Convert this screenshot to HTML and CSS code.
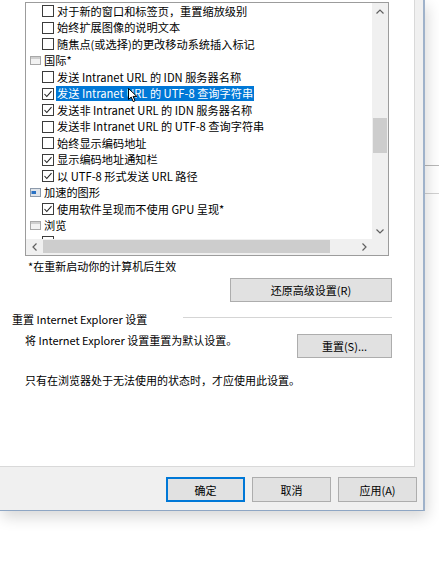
FILE: index.html
```html
<!DOCTYPE html>
<html lang="zh-CN">
<head>
<meta charset="utf-8">
<title>Internet 选项 - 高级</title>
<link rel="stylesheet" href="styles.css">
</head>
<body>
<div class="screen">
  <div class="dialog">
    <div class="page">
      <div class="tree">
        <div class="tree-view">
          <div class="row item"><span class="cb"></span><span class="lbl">对于新的窗口和标签页，重置缩放级别</span></div>
          <div class="row item"><span class="cb"></span><span class="lbl">始终扩展图像的说明文本</span></div>
          <div class="row item"><span class="cb"></span><span class="lbl">随焦点(或选择)的更改移动系统插入标记</span></div>
          <div class="row cat"><svg class="ico" width="11" height="11" viewBox="0 0 11 11"><rect x="0.5" y="1.5" width="10" height="8" fill="#f2f2f2" stroke="#a8a8a8"/><rect x="1" y="2" width="9" height="2" fill="#cfcfcf"/></svg><span class="lbl">国际*</span></div>
          <div class="row item"><span class="cb"></span><span class="lbl">发送 Intranet URL 的 IDN 服务器名称</span></div>
          <div class="row item sel"><span class="cb"><svg width="10" height="10" viewBox="0 0 10 10"><polyline points="1.5,5 3.8,7.5 8.5,2.2" fill="none" stroke="#222" stroke-width="1.1"/></svg></span><span class="lbl">发送 Intranet URL 的 UTF-8 查询字符串</span></div>
          <div class="row item"><span class="cb"><svg width="10" height="10" viewBox="0 0 10 10"><polyline points="1.5,5 3.8,7.5 8.5,2.2" fill="none" stroke="#222" stroke-width="1.1"/></svg></span><span class="lbl">发送非 Intranet URL 的 IDN 服务器名称</span></div>
          <div class="row item"><span class="cb"></span><span class="lbl">发送非 Intranet URL 的 UTF-8 查询字符串</span></div>
          <div class="row item"><span class="cb"></span><span class="lbl">始终显示编码地址</span></div>
          <div class="row item"><span class="cb"><svg width="10" height="10" viewBox="0 0 10 10"><polyline points="1.5,5 3.8,7.5 8.5,2.2" fill="none" stroke="#222" stroke-width="1.1"/></svg></span><span class="lbl">显示编码地址通知栏</span></div>
          <div class="row item"><span class="cb"><svg width="10" height="10" viewBox="0 0 10 10"><polyline points="1.5,5 3.8,7.5 8.5,2.2" fill="none" stroke="#222" stroke-width="1.1"/></svg></span><span class="lbl">以 UTF-8 形式发送 URL 路径</span></div>
          <div class="row cat"><svg class="ico" width="11" height="11" viewBox="0 0 11 11"><rect x="0.5" y="1.5" width="10" height="8" fill="#dfe4ea" stroke="#8d9aab"/><rect x="1.5" y="4" width="4.5" height="3" fill="#2a72c4"/></svg><span class="lbl">加速的图形</span></div>
          <div class="row item"><span class="cb"><svg width="10" height="10" viewBox="0 0 10 10"><polyline points="1.5,5 3.8,7.5 8.5,2.2" fill="none" stroke="#222" stroke-width="1.1"/></svg></span><span class="lbl">使用软件呈现而不使用 GPU 呈现*</span></div>
          <div class="row cat"><svg class="ico" width="11" height="11" viewBox="0 0 11 11"><rect x="0.5" y="1.5" width="10" height="8" fill="#f2f2f2" stroke="#a8a8a8"/><rect x="1" y="2" width="9" height="2" fill="#cfcfcf"/></svg><span class="lbl">浏览</span></div>
          <div class="row item"><span class="cb"></span></div>
          <svg class="cursor" width="10" height="15" viewBox="0 0 10 15"><path d="M0.5,0.5 L0.5,11.5 L3.2,9 L5.2,13.6 L7,12.8 L5.1,8.4 L8.8,8.4 Z" fill="#fff" stroke="#000" stroke-width="1" stroke-linejoin="round"/></svg>
        </div>
        <div class="vscroll">
          <div class="sbtn"><svg width="8" height="5" viewBox="0 0 8 5"><polyline points="0.5,4.5 4,1 7.5,4.5" fill="none" stroke="#606060" stroke-width="1.2"/></svg></div>
          <div class="vtrack"><div class="vthumb"></div></div>
          <div class="sbtn"><svg width="8" height="5" viewBox="0 0 8 5"><polyline points="0.5,0.5 4,4 7.5,0.5" fill="none" stroke="#606060" stroke-width="1.2"/></svg></div>
        </div>
        <div class="hscroll">
          <div class="sbtn"><svg width="5" height="8" viewBox="0 0 5 8"><polyline points="4.5,0.5 1,4 4.5,7.5" fill="none" stroke="#606060" stroke-width="1.2"/></svg></div>
          <div class="htrack"><div class="hthumb"></div></div>
          <div class="sbtn"><svg width="5" height="8" viewBox="0 0 5 8"><polyline points="0.5,0.5 4,4 0.5,7.5" fill="none" stroke="#606060" stroke-width="1.2"/></svg></div>
        </div>
        <div class="corner"></div>
      </div>
      <p class="note">*在重新启动你的计算机后生效</p>
      <div class="restore-row"><button class="btn restore">还原高级设置(R)</button></div>
      <div class="group-head"><span>重置 Internet Explorer 设置</span><span class="rule"></span></div>
      <div class="reset-row"><span>将 Internet Explorer 设置重置为默认设置。</span><button class="btn reset">重置(S)...</button></div>
      <p class="warn">只有在浏览器处于无法使用的状态时，才应使用此设置。</p>
    </div>
    <div class="footer">
      <button class="btn default">确定</button>
      <button class="btn">取消</button>
      <button class="btn">应用(A)</button>
    </div>
  </div>
  <div class="behind"><div class="ln1"></div><div class="ln2"></div></div>
</div>
</body>
</html>
```
FILE: styles.css
```css
* { box-sizing: border-box; }
html, body { margin: 0; padding: 0; }
body {
  background: #fff;
  font-family: "Noto Sans CJK SC", "Noto Sans", sans-serif;
  font-size: 11px;
  color: #000;
}
.screen {
  display: flex;
  width: 439px;
  height: 571px;
  overflow: hidden;
}
.dialog {
  flex: none;
  width: 425px;
  height: 511px;
  background: #f0f0f0;
  border-right: 2px solid #9fb2ca;
  border-bottom: 1px solid #8ea6c4;
  box-shadow: 2px 6px 14px rgba(0, 0, 0, 0.16);
  display: flex;
  flex-direction: column;
  position: relative;
  z-index: 1;
}
.page {
  flex: none;
  width: 415px;
  height: 467px;
  padding-top: 2px;
  background: #fff;
  border-right: 1px solid #d9d9d9;
  border-bottom: 1px solid #d9d9d9;
  display: flex;
  flex-direction: column;
}
.tree {
  flex: none;
  margin-left: 25px;
  width: 364px;
  height: 254px;
  border: 1px solid #9c9c9c;
  background: #fff;
  display: grid;
  grid-template-columns: 1fr 16px;
  grid-template-rows: 1fr 16px;
}
.tree-view {
  position: relative;
  overflow: hidden;
  padding-top: 0;
  font-size: 11.2px;
}
.row {
  height: 16.5px;
  display: flex;
  align-items: center;
  white-space: nowrap;
}
.row.item { padding-left: 16px; }
.row.cat { padding-left: 4px; }
.cb {
  flex: none;
  width: 12px;
  height: 12px;
  border: 1px solid #3c3c3c;
  background: #fff;
  margin-right: 2px;
  display: flex;
  align-items: center;
  justify-content: center;
}
.ico { flex: none; margin-right: 2px; }
.lbl {
  padding: 0 1px;
  line-height: 15px;
}
.sel .lbl {
  background: #0078d7;
  color: #fff;
}
.cursor {
  position: absolute;
  left: 102px;
  top: 85px;
}
.vscroll {
  background: #f0f0f0;
  display: flex;
  flex-direction: column;
}
.sbtn {
  flex: none;
  width: 16px;
  height: 16px;
  display: flex;
  align-items: center;
  justify-content: center;
}
.vtrack { flex: 1; }
.vthumb {
  margin: 99px 1px 0 1px;
  height: 35px;
  background: #cdcdcd;
}
.hscroll {
  background: #f0f0f0;
  display: flex;
}
.htrack { flex: 1; }
.hthumb {
  margin: 1px 0 0 1px;
  width: 287px;
  height: 13px;
  background: #cdcdcd;
}
.corner { background: #f0f0f0; }
.note {
  margin: 3px 0 0 28px;
  line-height: 14px;
}
.btn {
  font: inherit;
  color: #000;
  background: #e1e1e1;
  border: 1px solid #adadad;
  padding: 0;
  margin: 0;
}
.restore-row {
  display: flex;
  justify-content: flex-end;
  margin-top: 5px;
  padding-right: 22px;
}
.restore { width: 162px; height: 24px; }
.group-head {
  display: flex;
  align-items: flex-start;
  margin: 9px 0 0 12px;
  padding-right: 22px;
  line-height: 16px;
}
.rule {
  margin-left: auto;
  margin-top: 6px;
  width: 209px;
  height: 1px;
  background: #d5d5d5;
}
.reset-row {
  display: flex;
  justify-content: space-between;
  align-items: flex-start;
  margin: 6px 0 0 25px;
  padding-right: 22px;
  line-height: 14px;
}
.reset { width: 95px; height: 24px; margin-top: 1px; }
.warn {
  margin: 15px 0 0 25px;
  line-height: 14px;
}
.footer {
  flex: 1;
  display: flex;
  justify-content: flex-end;
  gap: 7px;
  padding: 10px 6px 0 0;
}
.footer .btn { width: 79px; height: 25px; }
.footer .default {
  border-color: #0078d7;
  box-shadow: inset 0 0 0 1px #0078d7;
}
.behind {
  flex: 1;
  padding-top: 165px;
}
.ln1 { height: 1px; background: #b8b8b8; }
.ln2 { height: 1px; margin-top: 27px; background: #d2d2d2; }
```
